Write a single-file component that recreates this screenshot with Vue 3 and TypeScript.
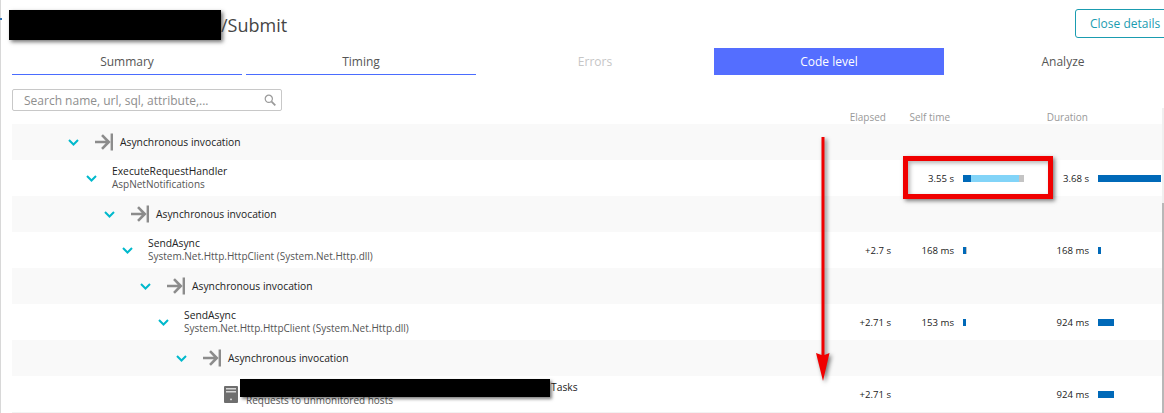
<script setup lang="ts">
interface Segment {
  width: number;
  color: string;
}

interface TreeRow {
  depth: number;
  kind: "async" | "method" | "service";
  name: string;
  sub?: string;
  elapsed?: string;
  self?: string;
  selfBar?: Segment[];
  duration?: string;
  durationBar?: number;
}

const DARK = "#0069b8";
const LIGHT = "#82d4f8";
const GREY = "#c4c4c4";

const tabs = ["Summary", "Timing", "Errors", "Code level", "Analyze"];
const httpClient = "System.Net.Http.HttpClient (System.Net.Http.dll)";

const rows: TreeRow[] = [
  { depth: 0, kind: "async", name: "Asynchronous invocation" },
  {
    depth: 1,
    kind: "method",
    name: "ExecuteRequestHandler",
    sub: "AspNetNotifications",
    self: "3.55 s",
    selfBar: [
      { width: 8, color: DARK },
      { width: 48, color: LIGHT },
      { width: 5, color: GREY },
    ],
    duration: "3.68 s",
    durationBar: 63,
  },
  { depth: 2, kind: "async", name: "Asynchronous invocation" },
  {
    depth: 3,
    kind: "method",
    name: "SendAsync",
    sub: httpClient,
    elapsed: "+2.7 s",
    self: "168 ms",
    selfBar: [
      { width: 3, color: DARK },
      { width: 1, color: GREY },
    ],
    duration: "168 ms",
    durationBar: 3,
  },
  { depth: 4, kind: "async", name: "Asynchronous invocation" },
  {
    depth: 5,
    kind: "method",
    name: "SendAsync",
    sub: httpClient,
    elapsed: "+2.71 s",
    self: "153 ms",
    selfBar: [{ width: 3, color: DARK }],
    duration: "924 ms",
    durationBar: 16,
  },
  { depth: 6, kind: "async", name: "Asynchronous invocation" },
  {
    depth: 7,
    kind: "service",
    name: "Tasks",
    sub: "Requests to unmonitored hosts",
    elapsed: "+2.71 s",
    duration: "924 ms",
    durationBar: 16,
  },
];
</script>

<template>
  <div class="page">
    <i class="edge-mark"></i>

    <header class="top">
      <h1 class="title"><span class="title-redaction"></span>/Submit</h1>
      <button class="close-btn">Close details</button>
    </header>

    <nav class="tabs">
      <div
        v-for="tab in tabs"
        :key="tab"
        class="tab"
        :class="{
          active: tab === 'Code level',
          disabled: tab === 'Errors',
          underlined: tab === 'Summary' || tab === 'Timing',
        }"
      >
        {{ tab }}
      </div>
    </nav>

    <div class="toolbar">
      <div class="search">
        <span>Search name, url, sql, attribute,...</span>
        <svg width="12" height="12" viewBox="0 0 12 12" fill="none" stroke="#9a9a9a">
          <circle cx="4.8" cy="4.8" r="3.6" stroke-width="1.2" />
          <path d="M7.6 7.6 11.3 11.3" stroke-width="1.8" />
        </svg>
      </div>
      <span class="col-label elapsed-label">Elapsed</span>
      <span class="col-label self-label">Self time</span>
      <span></span>
      <span class="col-label duration-label">Duration</span>
    </div>

    <section class="tree">
      <div v-for="(row, i) in rows" :key="i" class="row" :class="{ shaded: i % 2 === 0 }">
        <div class="name-cell" :style="{ paddingLeft: 56 + row.depth * 18 + 'px' }">
          <svg v-if="row.kind !== 'service'" class="chevron" width="11" height="7" viewBox="0 0 11 7" fill="none">
            <path d="M1 1l4.5 4.5L10 1" stroke="#00b9cc" stroke-width="2" />
          </svg>
          <span v-else class="chevron-slot"></span>

          <svg v-if="row.kind === 'async'" class="async-icon" width="18" height="18" viewBox="0 0 18 18" fill="none">
            <path d="M0 9h13.500M7 2.200 13.800 9 7 15.800" stroke="#8c8c8c" stroke-width="2.6" />
            <rect x="15.600" y="0.500" width="2.400" height="17" fill="#8c8c8c" />
          </svg>

          <svg v-if="row.kind === 'service'" class="server-icon" width="14" height="17" viewBox="0 0 14 17">
            <rect width="14" height="17" rx="1" fill="#6e6e6e" />
            <rect x="2" y="2" width="10" height="1.500" fill="#d6d6d6" />
            <rect x="2" y="5" width="10" height="1.500" fill="#d6d6d6" />
            <rect x="6.200" y="12.600" width="1.600" height="1.600" fill="#e6e6e6" />
          </svg>

          <div v-if="row.kind === 'async'" class="async-name">{{ row.name }}</div>
          <div v-else class="labels">
            <div class="name" :class="{ 'name-tail': row.kind === 'service' }">{{ row.name }}</div>
            <div class="sub">{{ row.sub }}</div>
            <i v-if="row.kind === 'service'" class="row-redaction"></i>
          </div>
        </div>

        <div class="value">{{ row.elapsed }}</div>
        <div class="value">{{ row.self }}</div>
        <div class="bar-cell">
          <i v-for="(seg, s) in row.selfBar" :key="s" :style="{ width: seg.width + 'px', background: seg.color }"></i>
        </div>
        <div class="value">{{ row.duration }}</div>
        <div class="bar-cell">
          <i v-if="row.durationBar" :style="{ width: row.durationBar + 'px', background: DARK }"></i>
        </div>
      </div>
    </section>

    <i class="scroll-track"></i>
    <i class="scroll-thumb"></i>

    <i class="highlight-box"></i>
    <svg class="arrow" width="16" height="246" viewBox="0 0 16 246">
      <path d="M6.500 0h3v218l5 -2L8 244 1 216l5.500 2z" fill="#f00000" />
    </svg>
  </div>
</template>

<style scoped>
.page {
  position: relative;
  width: 1164px;
  height: 413px;
  overflow: hidden;
  background: #fff;
  font-family: "Open Sans", "Noto Sans", sans-serif;
  color: #333;
}

.edge-mark {
  position: absolute;
  left: 0;
  top: 0;
  width: 1px;
  height: 413px;
  background: #d8d8d8;
}

.edge-mark::after {
  content: "";
  position: absolute;
  left: 0;
  top: 18px;
  width: 2px;
  height: 2px;
  background: #2b6cb0;
}

/* header */

.top {
  display: flex;
  justify-content: space-between;
  height: 48px;
  padding-left: 9px;
}

.title {
  display: flex;
  margin: 10px 0 0;
  font-size: 18px;
  line-height: 30px;
  font-weight: 400;
  color: #454545;
}

.title-redaction {
  width: 212px;
  height: 30px;
  background: #000;
  box-shadow: 2px 2px 4px rgba(0, 0, 0, 0.55);
}

.close-btn {
  width: 110px;
  height: 29px;
  margin-top: 9px;
  margin-right: -21px;
  padding: 0 0 0 14px;
  border: 1px solid #1a9cb0;
  border-radius: 3px;
  background: #fff;
  font-family: inherit;
  font-size: 12px;
  text-align: left;
  color: #1a9cb0;
}

/* tabs */

.tabs {
  display: grid;
  grid-template-columns: repeat(5, 230px);
  gap: 4px;
  margin-left: 12px;
  height: 27px;
}

.tab {
  box-sizing: border-box;
  height: 27px;
  font-size: 12px;
  line-height: 27px;
  text-align: center;
  color: #555;
}

.tab.underlined {
  border-bottom: 1px solid #4a6cff;
}

.tab.disabled {
  color: #c6c6c6;
}

.tab.active {
  background: #546eff;
  color: #fff;
}

/* search + column labels */

.toolbar {
  display: grid;
  grid-template-columns: 1fr 63px 63px 72px 63px 73px;
  height: 35px;
  margin: 14px 2px 0 12px;
}

.search {
  display: flex;
  justify-content: space-between;
  align-items: center;
  box-sizing: border-box;
  width: 270px;
  height: 22px;
  padding: 0 5px 0 11px;
  border: 1px solid #c8c8c8;
  border-radius: 2px;
  font-size: 12px;
  color: #8e8e8e;
}

.col-label {
  align-self: end;
  font-size: 10px;
  line-height: 14px;
  text-align: right;
  color: #999;
}

.elapsed-label {
  padding-right: 5px;
}

.self-label {
  padding-right: 4px;
}

.duration-label {
  padding-right: 1px;
}

/* tree */

.tree {
  margin: 0 2px 0 12px;
  border-bottom: 1px solid #f2f2f2;
}

.row {
  display: grid;
  grid-template-columns: 1fr 63px 63px 72px 63px 73px;
  align-items: center;
  height: 36px;
}

.row.shaded {
  background: #f9f9f9;
}

.name-cell {
  display: flex;
  align-items: center;
  min-width: 0;
  white-space: nowrap;
}

.chevron {
  flex: none;
  margin-right: 15px;
}

.chevron-slot {
  flex: none;
  width: 30px;
}

.async-icon {
  flex: none;
  margin: 0 7px 0 1px;
}

.server-icon {
  flex: none;
  margin-right: 8px;
}

.async-name {
  font-size: 10.300px;
  color: #222;
}

.labels {
  position: relative;
  font-size: 10.300px;
  line-height: 13px;
}

.name {
  color: #222;
}

.name-tail {
  padding-left: 305px;
}

.sub {
  font-size: 10px;
  color: #555;
}

.row-redaction {
  position: absolute;
  left: -6px;
  top: -2px;
  width: 310px;
  height: 18px;
  background: #000;
  box-shadow: 2px 2px 3px rgba(0, 0, 0, 0.5);
}

.value {
  font-size: 9.600px;
  text-align: right;
  white-space: nowrap;
  color: #222;
}

.bar-cell {
  display: flex;
  padding-left: 9px;
}

.bar-cell i {
  display: block;
  height: 7px;
}

/* overlays */

.scroll-track {
  position: absolute;
  right: 0;
  top: 108px;
  width: 2px;
  height: 305px;
  background: #f0f0f0;
}

.scroll-thumb {
  position: absolute;
  right: 0;
  top: 203px;
  width: 2px;
  height: 210px;
  background: #b8b8b8;
}

.highlight-box {
  position: absolute;
  left: 903px;
  top: 156px;
  box-sizing: border-box;
  width: 150px;
  height: 43px;
  border: 5px solid #f00000;
  box-shadow: 2px 2px 4px rgba(0, 0, 0, 0.5), inset 2px 2px 4px rgba(0, 0, 0, 0.3);
}

.arrow {
  position: absolute;
  left: 815px;
  top: 137px;
  filter: drop-shadow(2px 2px 2px rgba(0, 0, 0, 0.55));
}
</style>

<style>
html,
body {
  margin: 0;
  overflow: hidden;
}
</style>
